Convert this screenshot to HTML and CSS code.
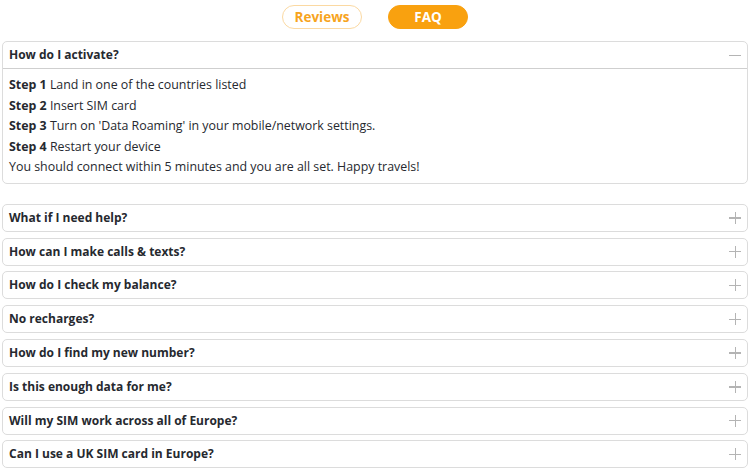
FILE: index.html
```html
<!DOCTYPE html>
<html lang="en">
<head>
    <meta charset="UTF-8">
    <title>FAQ</title>
    <link rel="stylesheet" href="styles.css">
</head>
<body>
    <div class="tabs">
        <button class="tab">Reviews</button>
        <button class="tab active">FAQ</button>
    </div>

    <div class="faq">
        <div class="item open">
            <div class="question">How do I activate?<span class="toggle minus"></span></div>
            <div class="answer">
                <p><b>Step 1</b> Land in one of the countries listed</p>
                <p><b>Step 2</b> Insert SIM card</p>
                <p><b>Step 3</b> Turn on 'Data Roaming' in your mobile/network settings.</p>
                <p><b>Step 4</b> Restart your device</p>
                <p>You should connect within 5 minutes and you are all set. Happy travels!</p>
            </div>
        </div>

        <div class="item"><div class="question">What if I need help?<span class="toggle"></span></div></div>
        <div class="item"><div class="question">How can I make calls &amp; texts?<span class="toggle"></span></div></div>
        <div class="item"><div class="question">How do I check my balance?<span class="toggle"></span></div></div>
        <div class="item"><div class="question">No recharges?<span class="toggle"></span></div></div>
        <div class="item"><div class="question">How do I find my new number?<span class="toggle"></span></div></div>
        <div class="item"><div class="question">Is this enough data for me?<span class="toggle"></span></div></div>
        <div class="item"><div class="question">Will my SIM work across all of Europe?<span class="toggle"></span></div></div>
        <div class="item"><div class="question">Can I use a UK SIM card in Europe?<span class="toggle"></span></div></div>
    </div>
</body>
</html>
```

FILE: styles.css
```css
body {
    margin: 0;
    padding: 5px 2px 0;
    font-family: "Open Sans", sans-serif;
    color: #26292f;
    background: #fff;
}
.tabs {
    display: flex;
    justify-content: center;
    gap: 26px;
    margin-bottom: 12px;
}
.tab {
    width: 80px;
    height: 24px;
    border-radius: 12px;
    border: 1px solid #fbd9a2;
    background: #fff;
    color: #f7a41d;
    font-family: inherit;
    font-weight: 700;
    font-size: 13.5px;
    padding: 0;
}
.tab.active {
    background: #f9a10f;
    border-color: #f9a10f;
    color: #fff;
}
.faq {
    display: flex;
    flex-direction: column;
    gap: 5.8px;
}
.item {
    border: 1px solid #dcdcdc;
    border-radius: 5px;
}
.item.open {
    margin-bottom: 14.5px;
}
.question {
    position: relative;
    height: 26px;
    line-height: 26px;
    padding: 0 6px;
    font-size: 12px;
    font-weight: 700;
}
.open .question {
    border-bottom: 1px solid #cfcfcf;
}
.answer {
    padding: 6px 6px 5px;
    font-size: 12.4px;
}
.answer p {
    margin: 0;
    line-height: 20.5px;
}
.toggle {
    position: absolute;
    right: 6px;
    top: 7px;
    width: 12px;
    height: 12px;
}
.toggle::before,
.toggle::after {
    content: "";
    position: absolute;
    background: #b4b4b4;
}
.toggle::before {
    left: 0;
    top: 5.5px;
    width: 12px;
    height: 1.3px;
}
.toggle::after {
    left: 5.5px;
    top: 0;
    width: 1.3px;
    height: 12px;
}
.toggle.minus::after {
    display: none;
}
```
